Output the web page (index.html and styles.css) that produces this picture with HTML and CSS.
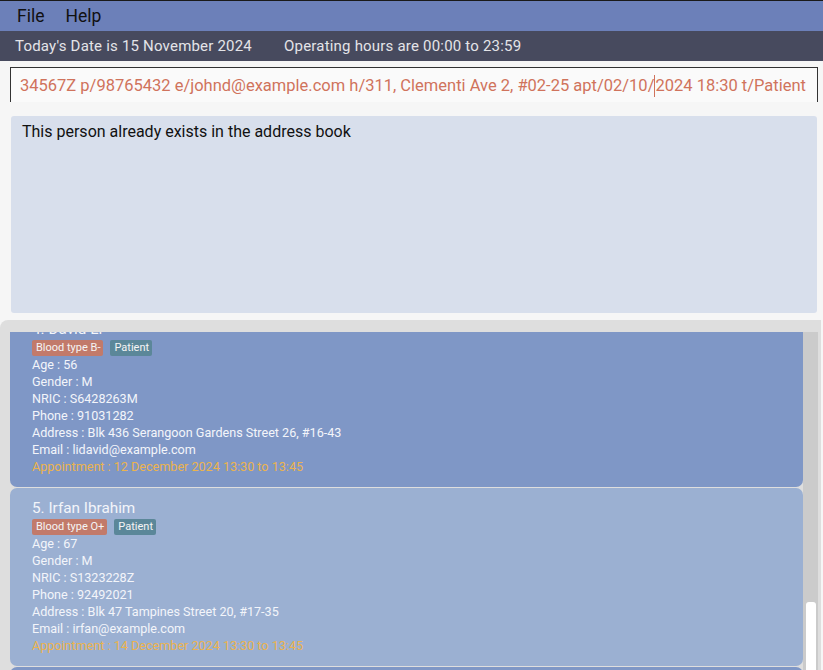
FILE: index.html
```html
<!DOCTYPE html>
<html>
<head>
<meta charset="utf-8">
<link rel="stylesheet" href="styles.css">
</head>
<body>
<div class="app">
  <div class="menubar">
    <span class="menu-item">File</span>
    <span class="menu-item">Help</span>
  </div>
  <div class="statusbar">
    <span class="status-date">Today's Date is 15 November 2024</span>
    <span class="status-hours">Operating hours are 00:00 to 23:59</span>
  </div>
  <div class="top-area">
    <div class="command-box">
      <span class="command-text">34567Z p/98765432 e/johnd@example.com h/311, Clementi Ave 2, #02-25 apt/02/10/<span class="caret"></span>2024 18:30 t/Patient</span>
    </div>
    <div class="result-box">This person already exists in the address book</div>
  </div>
  <div class="list-panel">
    <div class="list-viewport">
      <div class="list-content">
        <div class="card card-dark">
          <div class="card-name">4. David Li</div>
          <div class="tags"><span class="tag tag-blood">Blood type B-</span><span class="tag tag-role">Patient</span></div>
          <div class="field">Age : 56</div>
          <div class="field">Gender : M</div>
          <div class="field">NRIC : S6428263M</div>
          <div class="field">Phone : 91031282</div>
          <div class="field">Address : Blk 436 Serangoon Gardens Street 26, #16-43</div>
          <div class="field">Email : lidavid@example.com</div>
          <div class="field appt">Appointment : 12 December 2024 13:30 to 13:45</div>
        </div>
        <div class="card card-light">
          <div class="card-name">5. Irfan Ibrahim</div>
          <div class="tags"><span class="tag tag-blood">Blood type O+</span><span class="tag tag-role">Patient</span></div>
          <div class="field">Age : 67</div>
          <div class="field">Gender : M</div>
          <div class="field">NRIC : S1323228Z</div>
          <div class="field">Phone : 92492021</div>
          <div class="field">Address : Blk 47 Tampines Street 20, #17-35</div>
          <div class="field">Email : irfan@example.com</div>
          <div class="field appt">Appointment : 14 December 2024 13:30 to 13:45</div>
        </div>
        <div class="card card-dark card-empty"></div>
      </div>
    </div>
    <div class="scroll-track"><div class="scroll-thumb"></div></div>
  </div>
</div>
</body>
</html>
```
FILE: styles.css
```css
* { box-sizing: border-box; }
html, body { margin: 0; padding: 0; }
body {
  width: 823px;
  height: 670px;
  overflow: hidden;
  background: #f6f6f6;
  font-family: Roboto, "Noto Sans", sans-serif;
}
.app {
  display: flex;
  flex-direction: column;
  height: 670px;
  border-top: 1px solid #1a1a1a;
}
.menubar {
  height: 30px;
  background: #6c80b9;
  display: flex;
  align-items: center;
  padding-left: 17px;
  gap: 21px;
}
.menu-item {
  font-size: 17.5px;
  color: #111;
}
.statusbar {
  height: 30px;
  background: #474a5e;
  display: flex;
  align-items: center;
  padding-left: 15px;
  color: #e4e4e8;
  font-size: 15px;
  letter-spacing: 0.2px;
}
.status-hours { margin-left: 32px; }
.top-area {
  padding: 6px 5px 0 10px;
}
.command-box {
  height: 35px;
  background: #fafafa;
  border: 1px solid #333;
  border-bottom: none;
  display: flex;
  align-items: center;
  padding-left: 9px;
  width: 808px;
  overflow: hidden;
  white-space: nowrap;
}
.command-text {
  font-size: 16.5px;
  color: #d0735c;
}
.caret {
  display: inline-block;
  width: 1px;
  height: 22px;
  background: #d0735c;
  vertical-align: middle;
  margin: -4px 0;
}
.result-box {
  margin-top: 14px;
  margin-left: 1px;
  width: 806px;
  height: 197px;
  background: #d8dfec;
  border-radius: 3px;
  padding: 6px 11px;
  font-size: 16px;
  color: #111;
}
.list-panel {
  margin-top: 7px;
  flex: 1;
  width: 821px;
  background: #dedede;
  border-radius: 8px 0 0 0;
  display: flex;
  padding: 12px 3px 0 10px;
  overflow: hidden;
}
.list-viewport {
  flex: 1;
  overflow: hidden;
}
.list-content {
  margin-top: -23px;
  display: flex;
  flex-direction: column;
  gap: 1px;
}
.card {
  height: 178px;
  border-radius: 7px;
  padding: 10px 22px 0;
  color: #f3f5fa;
}
.card-dark { background: #7f97c6; }
.card-light { background: #9bb0d2; }
.card-name {
  font-size: 15.3px;
  line-height: 21px;
}
.tags {
  display: flex;
  gap: 7px;
  height: 16px;
}
.tag {
  font-size: 11px;
  line-height: 16px;
  padding: 0 3px 0 4px;
  border-radius: 2px;
  color: #f5f5f5;
}
.tag-blood { background: #c27a6a; }
.tag-role { background: #5b8799; }
.field {
  font-size: 12.6px;
  line-height: 17px;
}
.appt { color: #ebb34e; }
.scroll-track {
  width: 15px;
  background: #cbcbcb;
  position: relative;
}
.scroll-thumb {
  position: absolute;
  left: 3px;
  top: 270px;
  width: 10px;
  height: 120px;
  background: #ffffff;
  border-radius: 3px;
}
```
